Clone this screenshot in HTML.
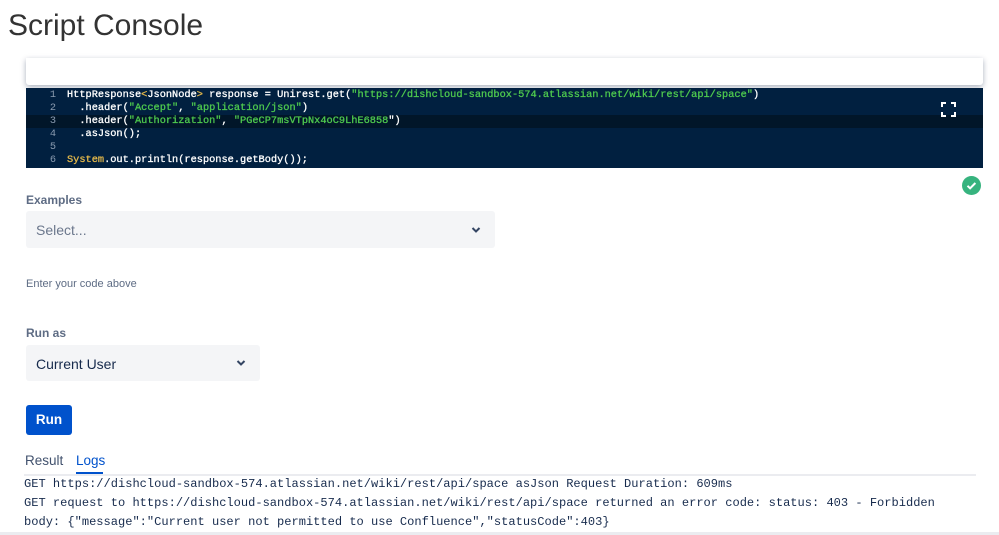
<!DOCTYPE html>
<html><head><meta charset="utf-8"><style>
body{margin:0;width:999px;height:535px;background:#fff;font-family:"Liberation Sans",sans-serif;position:relative;overflow:hidden}
.a{position:absolute}
.title{left:8px;top:9px;font-size:30px;color:#333;}
.card{left:26px;top:58px;width:957px;height:27px;background:#fff;box-shadow:0 2px 6px rgba(9,30,66,.35);border-radius:0 0 3px 3px}
.code{left:26px;top:88px;width:957px;height:80px;background:#012040;font-family:"Liberation Mono",monospace;font-size:10.3px;line-height:13px;color:#fff}
.ln{position:absolute;left:0;width:957px;height:13px;white-space:pre;-webkit-text-stroke:0.3px}
.ln b{font-weight:normal;display:inline-block;width:30px;text-align:right;color:#8a9bb0;margin-right:11px;-webkit-text-stroke:0}
.g{color:#4ec94e}.y{color:#e4b84a}
.lbl{font-size:12px;font-weight:bold;color:#5e6c84}
.sel{background:#f4f5f7;border-radius:3px;font-size:14px;color:#172b4d}
.log{font-family:"Liberation Mono",monospace;font-size:12.05px;color:#172b4d;left:24px;white-space:pre}
</style></head><body>
<div class="a title">Script Console</div>
<div class="a card"></div>
<div class="a code">
<div class="ln" style="top:1px"><b>1</b>HttpResponse<span class="y">&lt;</span>JsonNode<span class="y">&gt;</span> response = Unirest.get(<span class="g">"https://dishcloud-sandbox-574.atlassian.net/wiki/rest/api/space"</span>)</div>
<div class="ln" style="top:14px"><b>2</b>  .header(<span class="g">"Accept"</span>, <span class="g">"application/json"</span>)</div>
<div class="ln" style="top:27px;background:#011629"><b>3</b>  .header(<span class="g">"Authorization"</span>, <span class="g">"PGeCP7msVTpNx4oC9LhE6858</span>")</div>
<div class="ln" style="top:40px"><b>4</b>  .asJson();</div>
<div class="ln" style="top:53px"><b>5</b></div>
<div class="ln" style="top:66px"><b>6</b><span class="y">System</span>.out.println(response.getBody());</div>
<svg style="position:absolute;left:915px;top:14px" width="15" height="15" viewBox="0 0 15 15" fill="none" stroke="#fff" stroke-width="2"><path d="M1 5V1h4M10 1h4v4M14 10v4h-4M5 14H1v-4"/></svg>
</div>
<svg class="a" style="left:962px;top:176px" width="19" height="19" viewBox="0 0 19 19"><circle cx="9.5" cy="9.5" r="9.5" fill="#36b37e"/><path d="M5.5 9.8l2.6 2.5 5.3-5.3" stroke="#fff" stroke-width="2" fill="none"/></svg>
<div class="a lbl" style="left:26px;top:193px">Examples</div>
<div class="a sel" style="left:26px;top:211px;width:469px;height:37px;color:#6b778c"><span class="a" style="left:10px;top:11px">Select...</span>
<svg class="a" style="left:445px;top:15px" width="10" height="8" viewBox="0 0 10 8"><path d="M1.5 2l3.5 3.5L8.5 2" stroke="#344563" stroke-width="2" fill="none"/></svg></div>
<div class="a" style="left:26px;top:278px;font-size:11px;color:#5e6c84">Enter your code above</div>
<div class="a lbl" style="left:26px;top:326px">Run as</div>
<div class="a sel" style="left:26px;top:345px;width:234px;height:36px"><span class="a" style="left:10px;top:11px">Current User</span>
<svg class="a" style="left:210px;top:14px" width="10" height="8" viewBox="0 0 10 8"><path d="M1.5 2l3.5 3.5L8.5 2" stroke="#344563" stroke-width="2" fill="none"/></svg></div>
<div class="a" style="left:26px;top:405px;width:46px;height:30px;background:#0052cc;border-radius:3px;color:#fff;font-weight:bold;font-size:13.5px;text-align:center;line-height:30px">Run</div>
<div class="a" style="left:25px;top:453px;font-size:13.5px;color:#42526e">Result</div>
<div class="a" style="left:76px;top:453px;font-size:13.5px;color:#0052cc">Logs</div>
<div class="a" style="left:76px;top:472px;width:27px;height:2px;background:#0052cc"></div>
<div class="a" style="left:24px;top:474px;width:952px;height:2px;background:#ebecf0"></div>
<div class="a log" style="top:477px">GET https://dishcloud-sandbox-574.atlassian.net/wiki/rest/api/space asJson Request Duration: 609ms</div>
<div class="a log" style="top:496px">GET request to https://dishcloud-sandbox-574.atlassian.net/wiki/rest/api/space returned an error code: status: 403 - Forbidden</div>
<div class="a log" style="top:515px">body: {"message":"Current user not permitted to use Confluence","statusCode":403}</div>
<div class="a" style="left:0;top:532px;width:999px;height:3px;background:#ebecf0"></div>
</body></html>
